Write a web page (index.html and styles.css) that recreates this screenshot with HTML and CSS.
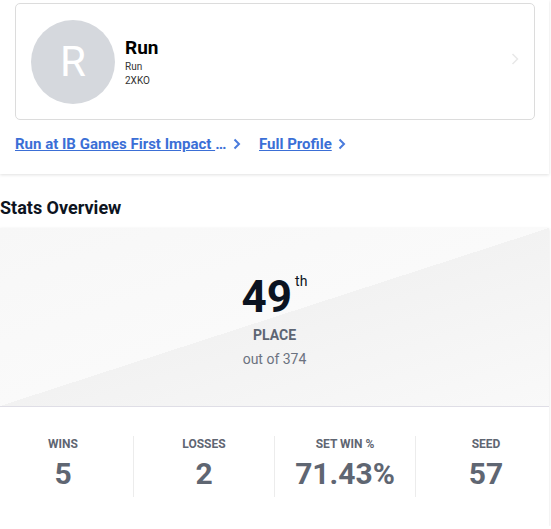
FILE: index.html
```html
<!DOCTYPE html>
<html lang="en">
<head>
<meta charset="utf-8">
<title>Run - Stats</title>
<link rel="stylesheet" href="styles.css">
</head>
<body>
<div class="profile-card">
  <div class="player">
    <div class="avatar">R</div>
    <div class="info">
      <div class="name">Run</div>
      <div class="sub">Run</div>
      <div class="sub">2XKO</div>
    </div>
    <svg class="card-chev" viewBox="0 0 8 12" width="8" height="12"><path d="M1.5 1l5 5-5 5" fill="none" stroke="currentColor" stroke-width="1.5"/></svg>
  </div>
  <div class="links">
    <a class="link" href="#"><span class="link-text trunc">Run at IB Games First Impact 2025</span><svg class="chev" viewBox="0 0 8 12" width="8" height="12"><path d="M1.5 1.5l4.5 4.5-4.5 4.5" fill="none" stroke="currentColor" stroke-width="2"/></svg></a>
    <a class="link" href="#"><span class="link-text">Full Profile</span><svg class="chev" viewBox="0 0 8 12" width="8" height="12"><path d="M1.5 1.5l4.5 4.5-4.5 4.5" fill="none" stroke="currentColor" stroke-width="2"/></svg></a>
  </div>
</div>

<h2 class="section-title">Stats Overview</h2>

<div class="stats-card">
  <div class="placement">
    <div class="place-row"><span class="place-num">49</span><span class="place-sup">th</span></div>
    <div class="place-label">PLACE</div>
    <div class="place-total">out of 374</div>
  </div>
  <div class="stat-row">
    <div class="stat"><div class="stat-label">WINS</div><div class="stat-value">5</div></div>
    <div class="divider"></div>
    <div class="stat"><div class="stat-label">LOSSES</div><div class="stat-value">2</div></div>
    <div class="divider"></div>
    <div class="stat"><div class="stat-label">SET WIN %</div><div class="stat-value">71.43%</div></div>
    <div class="divider"></div>
    <div class="stat"><div class="stat-label">SEED</div><div class="stat-value">57</div></div>
  </div>
</div>
</body>
</html>
```

FILE: styles.css
```css
body {
  margin: 0;
  background: #fff;
  font-family: Roboto, "Liberation Sans", Arial, sans-serif;
}

.profile-card {
  margin-right: 2px;
  padding: 3px 14px 20px 15px;
  background: #fff;
  box-shadow: 0 1px 3px rgba(0, 0, 0, 0.12);
}

.player {
  display: flex;
  align-items: center;
  height: 117px;
  box-sizing: border-box;
  border: 1px solid #dcdcdc;
  border-radius: 5px;
  padding: 0 15px;
}

.avatar {
  width: 84px;
  height: 84px;
  flex-shrink: 0;
  border-radius: 50%;
  background: #d5d8dd;
  color: #fff;
  font-size: 42px;
  font-weight: 400;
  display: flex;
  align-items: center;
  justify-content: center;
}

.info {
  margin-left: 10px;
}

.name {
  font-size: 19px;
  line-height: 23px;
  font-weight: 700;
  color: #000;
  margin-bottom: 1px;
}

.sub {
  font-size: 10px;
  line-height: 14px;
  color: #333;
}

.card-chev {
  margin-left: auto;
  margin-top: -5px;
  color: #e8e8e8;
}

.links {
  display: flex;
  align-items: center;
  gap: 18px;
  margin-top: 14px;
  height: 20px;
}

.link {
  display: flex;
  align-items: center;
  color: #3b6fd6;
  font-size: 15px;
  line-height: 20px;
  font-weight: 700;
  text-decoration: none;
}

.link-text {
  text-decoration: underline;
}

.trunc {
  display: block;
  max-width: 212px;
  overflow: hidden;
  white-space: nowrap;
  text-overflow: ellipsis;
}

.chev {
  margin-left: 6px;
  color: #4a7bdc;
}

.section-title {
  margin: 22px 0 8px;
  font-size: 18px;
  line-height: 24px;
  font-weight: 700;
  color: #0d1421;
}

.stats-card {
  margin-right: 2px;
  background: #fff;
  box-shadow: 0 1px 3px rgba(0, 0, 0, 0.12);
}

.placement {
  height: 179px;
  box-sizing: border-box;
  padding-top: 47px;
  border-bottom: 1px solid #dfdee6;
  text-align: center;
  background: linear-gradient(to bottom right, #f7f7f7 0%, #fafafa 50%, #f2f2f2 50%, #f9f9f9 100%);
}

.place-row {
  display: flex;
  justify-content: center;
  align-items: flex-start;
}

.place-num {
  font-size: 44px;
  line-height: 44px;
  font-weight: 700;
  color: #0b1320;
}

.place-sup {
  font-size: 14px;
  line-height: 14px;
  margin-left: 3px;
  margin-top: -1px;
  color: #0b1320;
}

.place-label {
  margin-top: 6px;
  font-size: 14px;
  line-height: 20px;
  font-weight: 700;
  color: #5d6573;
}

.place-total {
  margin-top: 4px;
  font-size: 14px;
  line-height: 20px;
  color: #6b7280;
}

.stat-row {
  display: flex;
  padding: 29px 0;
}

.stat {
  flex: 1;
  text-align: center;
  padding-bottom: 5px;
}

.divider {
  width: 1px;
  margin: 0 7px;
  background: #ececec;
}

.stat-label {
  font-size: 12px;
  line-height: 16px;
  font-weight: 700;
  color: #5f6672;
}

.stat-value {
  margin-top: 4px;
  font-size: 30px;
  line-height: 36px;
  font-weight: 700;
  color: #5f6672;
}
```
